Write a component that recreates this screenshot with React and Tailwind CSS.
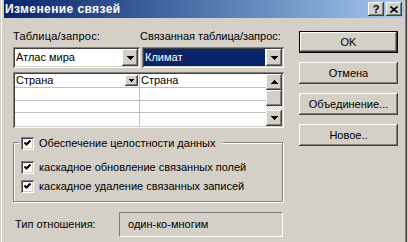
import React from "react";

const raised =
  "shadow-[inset_-1px_-1px_0_#404040,inset_1px_1px_0_#ffffff,inset_-2px_-2px_0_#808080,inset_2px_2px_0_#d4d0c8]";
const sunken =
  "shadow-[inset_1px_1px_0_#808080,inset_-1px_-1px_0_#ffffff,inset_2px_2px_0_#404040,inset_-2px_-2px_0_#d4d0c8]";

function Arrow({ up = false, small = false }) {
  const w = small ? 5 : 7;
  const h = small ? 3 : 4;
  return (
    <svg width={w} height={h} viewBox={`0 0 ${w} ${h}`} shapeRendering="crispEdges">
      {up ? (
        <polygon points={`0,${h} ${w},${h} ${w / 2},0`} fill="#000" />
      ) : (
        <polygon points={`0,0 ${w},0 ${w / 2},${h}`} fill="#000" />
      )}
    </svg>
  );
}

function DropBtn() {
  return (
    <div className={`w-[16px] h-[17px] bg-[#d4d0c8] flex items-center justify-center ${raised}`}>
      <Arrow />
    </div>
  );
}

function Check({ children }) {
  return (
    <div className="flex items-center gap-[5px] h-[13px]">
      <div className={`w-[13px] h-[13px] bg-white flex items-center justify-center ${sunken}`}>
        <svg width="13" height="13" viewBox="0 0 13 13">
          <polyline points="3.5,5.5 5.5,7.5 9.5,3.5" fill="none" stroke="#000" strokeWidth="2" />
        </svg>
      </div>
      <span className="leading-[13px]">{children}</span>
    </div>
  );
}

function Btn({ children, def = false }) {
  if (def) {
    return (
      <div className="w-[99px] h-[22px] border border-black">
        <div className={`w-full h-full flex items-center justify-center bg-[#d4d0c8] ${raised}`}>
          {children}
        </div>
      </div>
    );
  }
  return (
    <div className={`w-[99px] h-[22px] flex items-center justify-center bg-[#d4d0c8] ${raised}`}>
      {children}
    </div>
  );
}

export default function App() {
  return (
    <div
      className="w-[408px] h-[242px] bg-[#d4d0c8] flex text-[11px] text-black overflow-hidden"
      style={{ fontFamily: '"Liberation Sans", Arial, sans-serif' }}
    >
      {/* left frame */}
      <div className="w-[4px] h-full flex">
        <div className="w-px bg-[#d4d0c8]" />
        <div className="w-px bg-white" />
        <div className="w-[2px] bg-[#d4d0c8]" />
      </div>
      <div className="w-[400px] h-full flex flex-col">
        {/* title bar */}
        <div className="h-[18px] flex items-center bg-gradient-to-r from-[#0a246a] to-[#a6caf0] pr-[2px]">
          <span className="text-white font-bold text-[12px] tracking-[0.4px] leading-[18px] flex-1 pl-[1px]">
            Изменение связей
          </span>
          <div className={`w-[16px] h-[14px] bg-[#d4d0c8] flex items-center justify-center font-bold text-[11px] leading-none ${raised}`}>
            ?
          </div>
          <div className={`ml-[2px] w-[16px] h-[14px] bg-[#d4d0c8] flex items-center justify-center ${raised}`}>
            <svg width="8" height="7" viewBox="0 0 8 7">
              <path d="M0.5 0.5 L7.5 6.5 M7.5 0.5 L0.5 6.5" stroke="#000" strokeWidth="1.6" />
            </svg>
          </div>
        </div>
        {/* body */}
        <div className="flex flex-1">
          {/* left column */}
          <div className="ml-[9px] w-[271px] flex flex-col pt-[12px]">
            <div className="flex h-[13px] leading-[13px]">
              <span className="w-[127px] tracking-[0.2px]">Таблица/запрос:</span>
              <span>Связанная таблица/запрос:</span>
            </div>
            <div className="flex gap-[2px] mt-[4px] h-[21px]">
              <div className={`w-[127px] h-full bg-white flex items-center pl-[3px] pr-[2px] ${sunken}`}>
                <span className="flex-1">Атлас мира</span>
                <DropBtn />
              </div>
              <div className={`w-[142px] h-full bg-white flex items-center pl-[2px] pr-[2px] ${sunken}`}>
                <div className="flex-1 h-[17px] mr-[1px] bg-[#0a246a] text-white flex items-center pl-[1px]">
                  Климат
                </div>
                <DropBtn />
              </div>
            </div>
            {/* grid */}
            <div className={`mt-[4px] h-[56px] bg-white p-[2px] flex ${sunken}`}>
              <div className="flex-1 flex flex-col">
                {[0, 1, 2, 3].map((i) => (
                  <div key={i} className="h-[14px] flex border-b border-[#c0c0c0] last:border-b-0">
                    <div className="w-[125px] border-r border-[#c0c0c0] flex items-center pl-[1px] pr-[1px]">
                      {i === 0 && (
                        <>
                          <span className="flex-1 leading-[13px]">Страна</span>
                          <div className={`w-[13px] h-[11px] bg-[#d4d0c8] flex items-center justify-center ${raised}`}>
                            <Arrow small />
                          </div>
                        </>
                      )}
                    </div>
                    <div className="flex-1 pl-[1px] leading-[13px]">{i === 0 ? "Страна" : ""}</div>
                  </div>
                ))}
              </div>
              <div className="w-[16px] flex flex-col">
                <div className={`h-[16px] bg-[#d4d0c8] flex items-center justify-center ${raised}`}>
                  <Arrow up />
                </div>
                <div className={`h-[16px] bg-[#d4d0c8] ${raised}`} />
                <div className="flex-1 bg-[repeating-conic-gradient(#d4d0c8_0_25%,#ffffff_0_50%)] bg-[length:2px_2px]" />
                <div className={`h-[16px] bg-[#d4d0c8] flex items-center justify-center ${raised}`}>
                  <Arrow />
                </div>
              </div>
            </div>
            {/* group box */}
            <div className="mt-[9px] relative">
              <div className="h-[5px]" />
              <div className="h-[60px] w-[270px] border border-[#808080] shadow-[inset_1px_1px_0_#ffffff,1px_1px_0_#ffffff]" />
              <div className="absolute left-[6px] top-0 bg-[#d4d0c8] pl-[2px] pr-[8px]">
                <Check>Обеспечение целостности данных</Check>
              </div>
              <div className="absolute left-[8px] top-[24px] flex flex-col gap-[6px]">
                <Check>каскадное обновление связанных полей</Check>
                <Check>каскадное удаление связанных записей</Check>
              </div>
            </div>
            {/* type row */}
            <div className="mt-[10px] flex items-center h-[25px]">
              <span className="w-[106px] pl-[2px]">Тип отношения:</span>
              <div className="w-[164px] h-[25px] border-t border-l border-[#808080] border-b border-r border-b-white border-r-white flex items-center pl-[8px]">
                один-ко-многим
              </div>
            </div>
          </div>
          {/* right column */}
          <div className="ml-[15px] pt-[13px] flex flex-col gap-[9px]">
            <Btn def>OK</Btn>
            <Btn>Отмена</Btn>
            <Btn>Объединение...</Btn>
            <Btn>Новое..</Btn>
          </div>
        </div>
      </div>
      {/* right frame */}
      <div className="w-[4px] h-full flex">
        <div className="w-px bg-[#d4d0c8]" />
        <div className="w-px bg-[#808080]" />
        <div className="w-px bg-[#404040]" />
        <div className="w-px bg-[#d4d0c8]" />
      </div>
    </div>
  );
}
